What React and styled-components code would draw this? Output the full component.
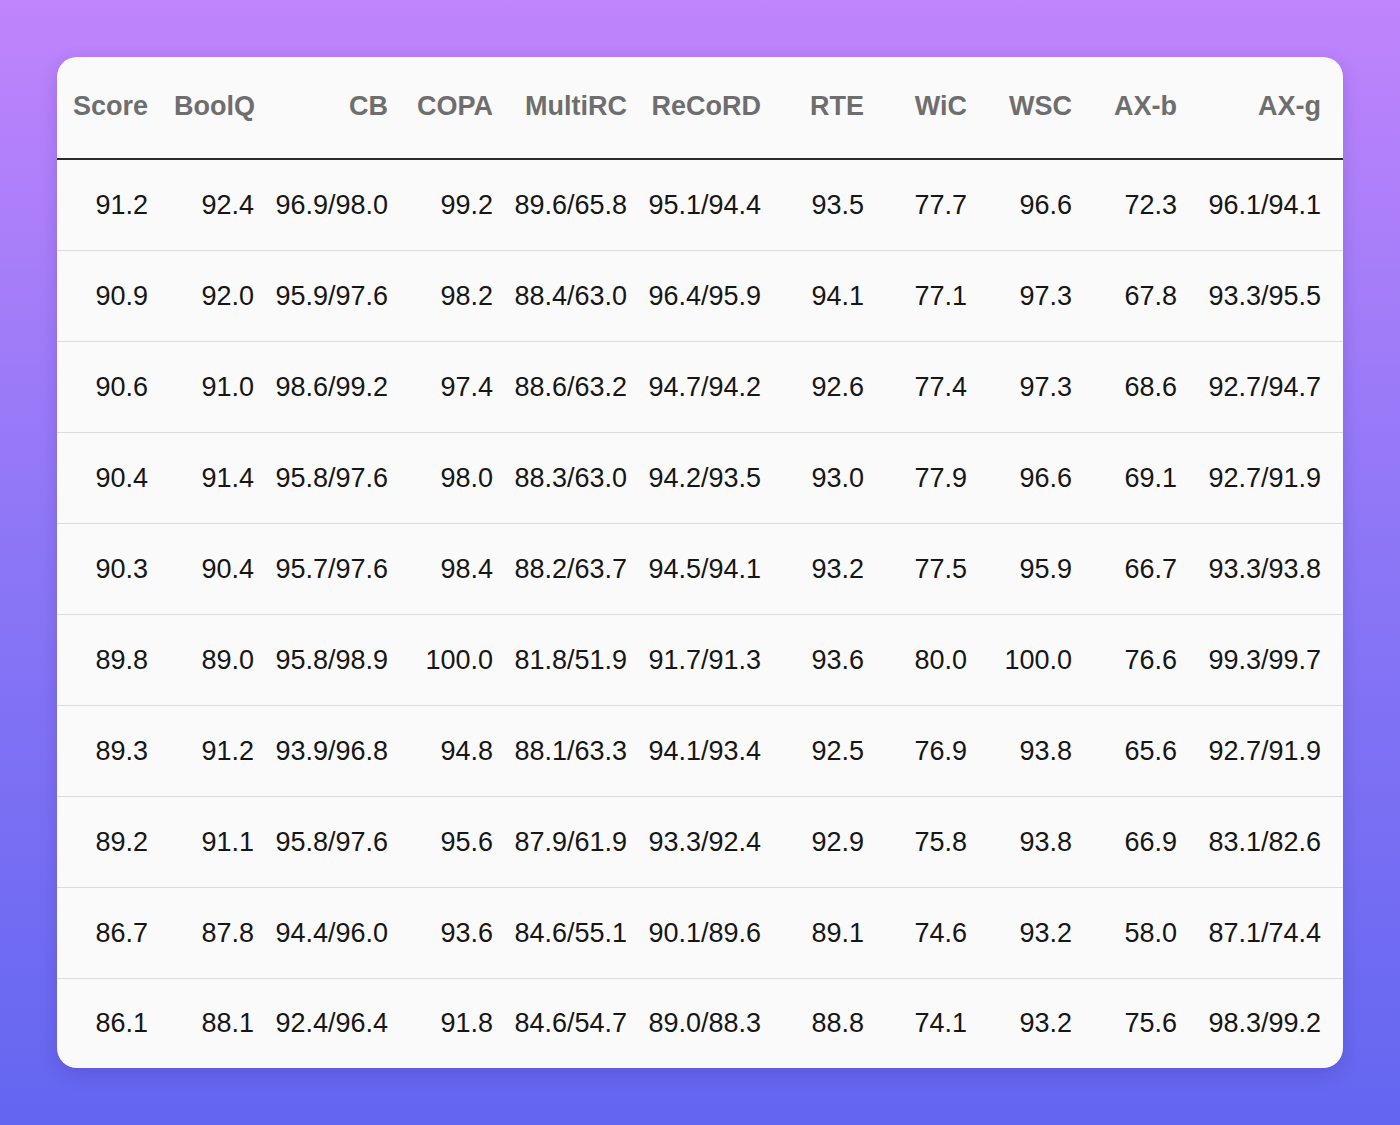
import styled, { createGlobalStyle } from 'styled-components';

const GlobalStyle = createGlobalStyle`
  html, body {
    margin: 0;
    padding: 0;
  }
  body {
    font-family: "Liberation Sans", Arial, sans-serif;
  }
`;

// Lebar kolom, diukur dari gambar
const lebarKolom = [101, 106, 134, 105, 134, 134, 103, 103, 105, 105, 144];
const kolomGrid = lebarKolom.map((w) => `${w}px`).join(' ') + ' 1fr';

const Latar = styled.div`
  width: 1400px;
  height: 1125px;
  box-sizing: border-box;
  padding: 57px;
  background: linear-gradient(180deg, #c084fc 0%, #8b76f6 50%, #6366f1 100%);
`;

const Kartu = styled.div`
  width: 1286px;
  height: 1011px;
  background: #fafafa;
  border-radius: 20px;
  overflow: hidden;
  box-shadow: 0 6px 18px rgba(40, 30, 110, 0.18);
`;

const tinggiBaris = (p) => (p.$kepala ? '103px' : p.$akhir ? '88px' : '91px');

const Baris = styled.div`
  display: grid;
  grid-template-columns: ${kolomGrid};
  align-items: center;
  height: ${tinggiBaris};
  border-bottom: ${(p) => (p.$kepala ? '2px solid #2b2b2b' : p.$akhir ? 'none' : '1px solid #dcdcdc')};
  box-sizing: border-box;
  padding-bottom: ${(p) => (p.$kepala ? '2px' : '0')};
`;

const Sel = styled.div`
  padding: 0 10px;
  white-space: nowrap;
  font-size: 27px;
  font-weight: ${(p) => (p.$kepala ? 700 : 400)};
  color: ${(p) => (p.$kepala ? '#6e6e6e' : '#161616')};
  text-align: ${(p) => (p.$kiri ? 'left' : 'right')};
  padding-left: ${(p) => (p.$kiri ? '16px' : '10px')};
`;

const kepala = ['Score', 'BoolQ', 'CB', 'COPA', 'MultiRC', 'ReCoRD', 'RTE', 'WiC', 'WSC', 'AX-b', 'AX-g'];

const data = [
  ['91.2', '92.4', '96.9/98.0', '99.2', '89.6/65.8', '95.1/94.4', '93.5', '77.7', '96.6', '72.3', '96.1/94.1'],
  ['90.9', '92.0', '95.9/97.6', '98.2', '88.4/63.0', '96.4/95.9', '94.1', '77.1', '97.3', '67.8', '93.3/95.5'],
  ['90.6', '91.0', '98.6/99.2', '97.4', '88.6/63.2', '94.7/94.2', '92.6', '77.4', '97.3', '68.6', '92.7/94.7'],
  ['90.4', '91.4', '95.8/97.6', '98.0', '88.3/63.0', '94.2/93.5', '93.0', '77.9', '96.6', '69.1', '92.7/91.9'],
  ['90.3', '90.4', '95.7/97.6', '98.4', '88.2/63.7', '94.5/94.1', '93.2', '77.5', '95.9', '66.7', '93.3/93.8'],
  ['89.8', '89.0', '95.8/98.9', '100.0', '81.8/51.9', '91.7/91.3', '93.6', '80.0', '100.0', '76.6', '99.3/99.7'],
  ['89.3', '91.2', '93.9/96.8', '94.8', '88.1/63.3', '94.1/93.4', '92.5', '76.9', '93.8', '65.6', '92.7/91.9'],
  ['89.2', '91.1', '95.8/97.6', '95.6', '87.9/61.9', '93.3/92.4', '92.9', '75.8', '93.8', '66.9', '83.1/82.6'],
  ['86.7', '87.8', '94.4/96.0', '93.6', '84.6/55.1', '90.1/89.6', '89.1', '74.6', '93.2', '58.0', '87.1/74.4'],
  ['86.1', '88.1', '92.4/96.4', '91.8', '84.6/54.7', '89.0/88.3', '88.8', '74.1', '93.2', '75.6', '98.3/99.2'],
];

const App = () => (
  <>
    <GlobalStyle />
    <Latar>
      <Kartu>
        <Baris $kepala>
          {kepala.map((k, i) => (
            <Sel key={k} $kepala $kiri={i < 2}>
              {k}
            </Sel>
          ))}
        </Baris>
        {data.map((baris, i) => (
          <Baris key={i} $akhir={i === data.length - 1}>
            {baris.map((nilai, j) => (
              <Sel key={j}>{nilai}</Sel>
            ))}
          </Baris>
        ))}
      </Kartu>
    </Latar>
  </>
);

export default App;
